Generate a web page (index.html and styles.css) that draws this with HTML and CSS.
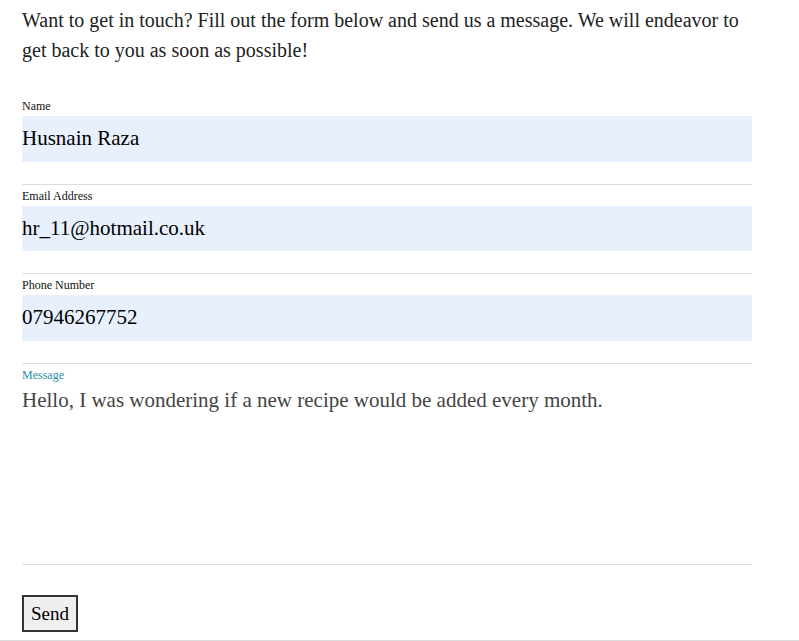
FILE: index.html
```html
<!DOCTYPE html>
<html>
<head>
<meta charset="utf-8">
<link rel="stylesheet" href="styles.css">
</head>
<body>
<div class="page">
  <p class="intro">Want to get in touch? Fill out the form below and send us a message. We will endeavor to get back to you as soon as possible!</p>
  <form class="form">
    <div class="field first">
      <label class="label">Name</label>
      <div class="input">Husnain Raza</div>
    </div>
    <div class="field">
      <label class="label">Email Address</label>
      <div class="input">hr_11@hotmail.co.uk</div>
    </div>
    <div class="field">
      <label class="label">Phone Number</label>
      <div class="input">07946267752</div>
    </div>
    <div class="field message">
      <label class="label active">Message</label>
      <div class="textarea">Hello, I was wondering if a new recipe would be added every month.</div>
    </div>
    <div class="actions">
      <button type="button" class="send">Send</button>
    </div>
  </form>
</div>
<div class="footer-line"></div>
</body>
</html>
```
FILE: styles.css
```css
html, body {
  margin: 0;
  padding: 0;
  background: #fff;
}
body {
  font-family: "Liberation Serif", "Times New Roman", serif;
  color: #222;
}
.page {
  padding-left: 22px;
  width: 730px;
}
.intro {
  margin: 5px 0 0;
  font-size: 20px;
  line-height: 30px;
  color: #222;
}
.form {
  margin-top: 30px;
}
.field {
  padding-top: 4px;
  padding-bottom: 22px;
  border-bottom: 1px solid #dddddd;
}
.label {
  display: block;
  font-size: 12px;
  line-height: 14px;
  color: #111;
}
.label.active {
  color: #2b8eaa;
}
.input {
  margin-top: 3px;
  height: 45.5px;
  background: #e8f0fe;
  font-size: 21px;
  line-height: 45px;
  color: #000;
}
.textarea {
  margin-top: 3px;
  height: 157px;
  font-size: 21px;
  line-height: 28px;
  color: #444;
  padding-top: 1px;
  box-sizing: border-box;
}
.actions {
  padding-top: 30px;
}
.send {
  font-family: "Liberation Serif", "Times New Roman", serif;
  font-size: 19px;
  width: 56px;
  height: 37px;
  padding: 1px 0 0;
  background: #efefef;
  border: 2px solid #333;
  color: #000;
  display: block;
}
.footer-line {
  margin-top: 8px;
  border-top: 1px solid #dddddd;
  width: 100%;
}
```
